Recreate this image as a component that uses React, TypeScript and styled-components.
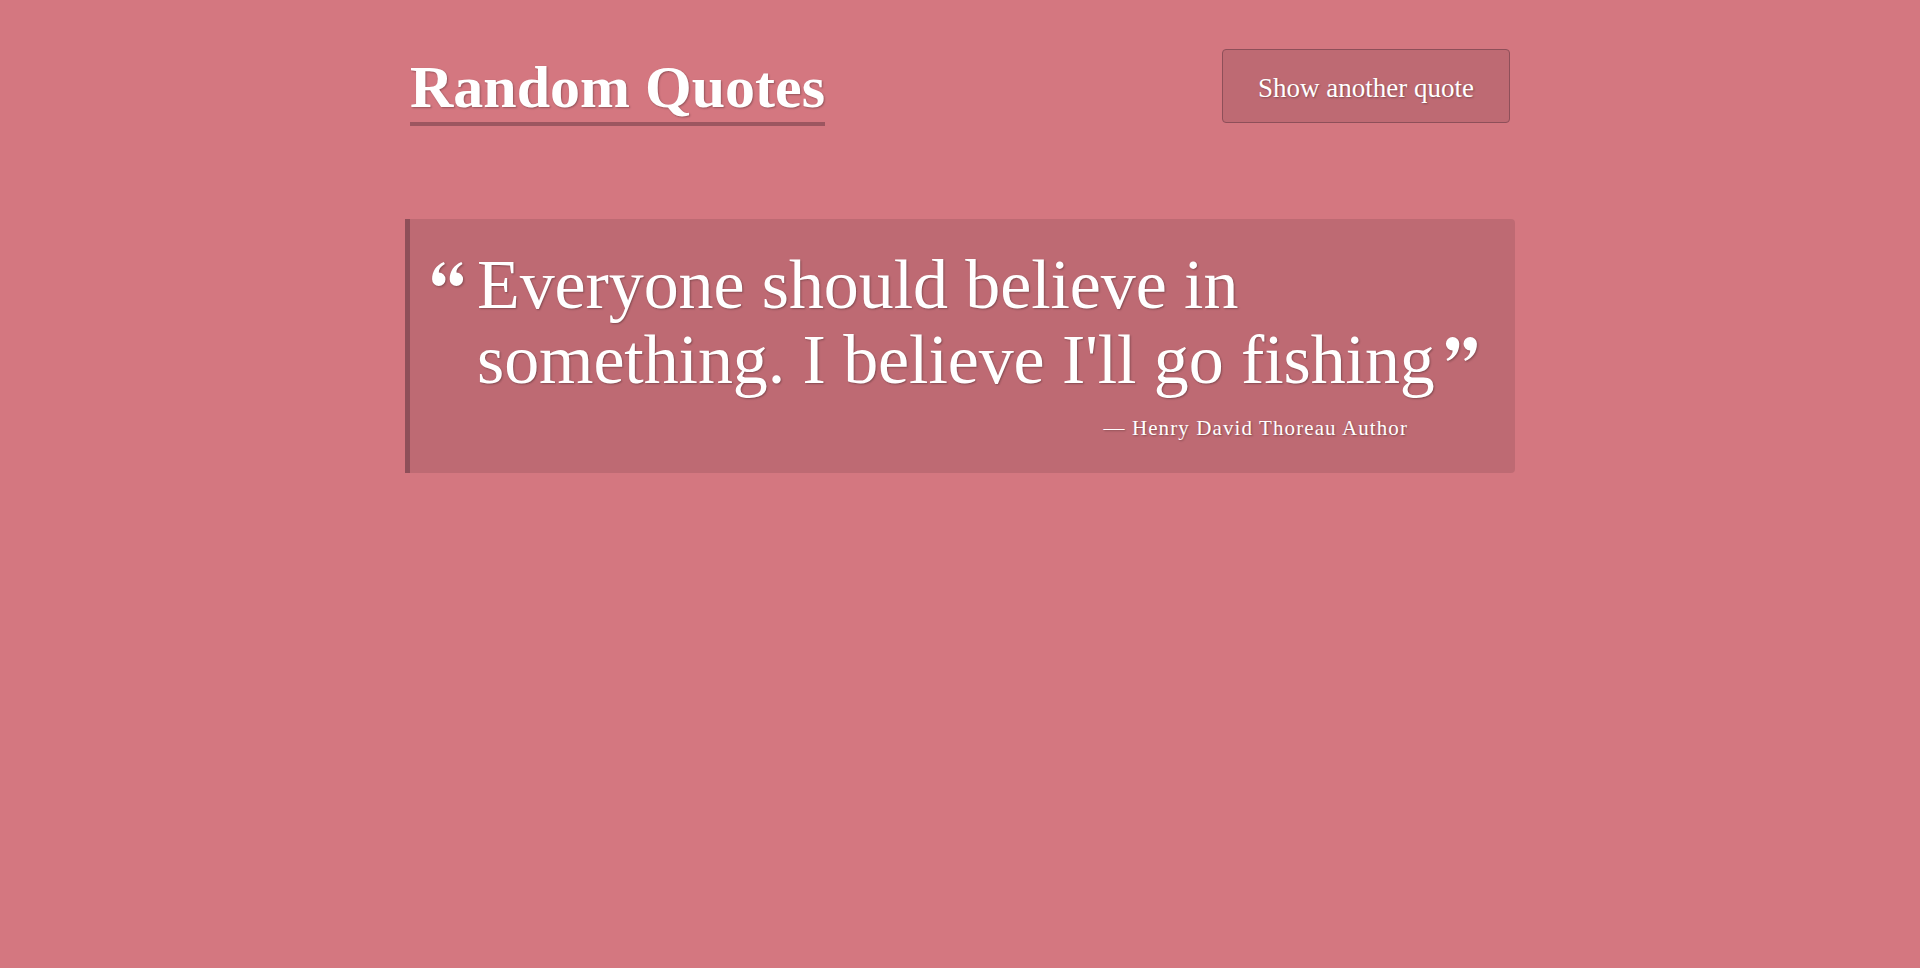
import React from "react";
import styled, { createGlobalStyle } from "styled-components";

const GlobalStyle = createGlobalStyle`
  html, body {
    margin: 0;
    padding: 0;
    background: #d47780;
    min-height: 100%;
  }
  body {
    font-family: "Liberation Serif", "DejaVu Serif", serif;
    color: #ffffff;
  }
`;

const Page = styled.div`
  min-height: 968px;
  background: #d47780;
`;

const Container = styled.main`
  width: 1100px;
  margin: 0 auto;
  padding-top: 49px;
`;

const Header = styled.header`
  display: flex;
  justify-content: space-between;
  align-items: flex-start;
`;

const Title = styled.h1`
  margin: 8px 0 0;
  display: inline-block;
  font-size: 60px;
  line-height: 60px;
  font-weight: 700;
  padding-bottom: 5px;
  border-bottom: 4px solid #9c5660;
  text-shadow: 1px 1px 2px rgba(0, 0, 0, 0.3);
`;

const Button = styled.button`
  box-sizing: border-box;
  width: 288px;
  height: 74px;
  padding: 4px 0 0;
  display: flex;
  align-items: center;
  justify-content: center;
  background: rgba(0, 0, 0, 0.1);
  border: 1px solid #8e4f59;
  border-radius: 4px;
  color: #ffffff;
  font-family: "Liberation Serif", "DejaVu Serif", serif;
  font-size: 27px;
  text-shadow: 1px 1px 2px rgba(0, 0, 0, 0.3);
  cursor: pointer;
`;

const QuoteBox = styled.blockquote`
  box-sizing: border-box;
  margin: 93px -5px 0 -5px;
  padding: 28px 0 30px 22px;
  background: rgba(0, 0, 0, 0.1);
  border-left: 5px solid #8e4f59;
  border-radius: 0 4px 4px 0;
  text-shadow: 1px 1px 2px rgba(0, 0, 0, 0.3);
`;

const QuoteRow = styled.div`
  display: flex;
  align-items: flex-start;
`;

const MarkCell = styled.span`
  font-size: 70px;
  line-height: 75px;
  margin-right: 14px;
`;

const MarkSvg = styled.svg<{ $close?: boolean }>`
  width: 31px;
  height: 24px;
  vertical-align: 22px;
  margin-left: ${(p) => (p.$close ? "11px" : "0")};
  filter: drop-shadow(1px 1px 1px rgba(0, 0, 0, 0.3));
  overflow: visible;
`;

const QuoteText = styled.p`
  margin: 0;
  width: 1010px;
  font-size: 70px;
  line-height: 75px;
  letter-spacing: -0.1px;
`;

const Author = styled.footer`
  margin: 16px 107px 0 0;
  text-align: right;
  font-size: 21px;
  line-height: 30px;
  letter-spacing: 1.1px;
`;

const markPath =
  "M6.8 10.6a6.7 6.7 0 1 1 0 13.4A6.7 6.7 0 0 1 0.1 17.3C0.1 9.4 4.2 3.1 11.8 0l1.1 2C8.6 4.5 6.6 7.4 6.8 10.6z";

function QuoteMark({ close }: { close?: boolean }) {
  return (
    <MarkSvg $close={close} viewBox="0 0 31 24" aria-hidden="true">
      <g
        fill="#ffffff"
        transform={close ? "rotate(180 15.5 12)" : undefined}
      >
        <path d={markPath} />
        <path d={markPath} transform="translate(17.6 0)" />
      </g>
    </MarkSvg>
  );
}

export default function App() {
  return (
    <Page>
      <GlobalStyle />
      <Container>
        <Header>
          <Title>Random Quotes</Title>
          <Button type="button">Show another quote</Button>
        </Header>
        <QuoteBox>
          <QuoteRow>
            <MarkCell>
              <QuoteMark />
            </MarkCell>
            <QuoteText>
              Everyone should believe in something. I believe I'll go fishing
              <QuoteMark close />
            </QuoteText>
          </QuoteRow>
          <Author>— Henry David Thoreau Author</Author>
        </QuoteBox>
      </Container>
    </Page>
  );
}
